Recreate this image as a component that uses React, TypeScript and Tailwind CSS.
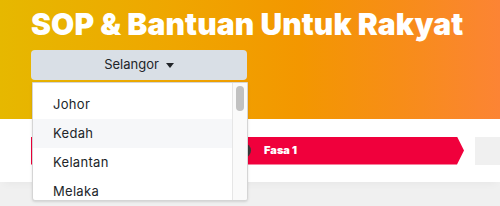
const states = ['Johor', 'Kedah', 'Kelantan', 'Melaka']

const StateDropdown = () => {
  return (
    <div className="relative w-[217px]">
      <button className="flex h-[30px] w-[216px] items-center justify-center gap-[7px] rounded-[4px] bg-[#d9dfe6] text-[13px] text-[#212529]">
        Selangor
        <span className="mt-[1px] h-0 w-0 border-x-[4.5px] border-t-[5px] border-x-transparent border-t-[#212529]" />
      </button>
      <div className="absolute left-[1px] top-[32px] z-10 flex h-[119px] w-[216px] overflow-hidden rounded-b-[3px] border border-[#d5d5d5] bg-white shadow-sm">
        <ul className="flex-1 pt-[7px]">
          {states.map((s) => (
            <li
              key={s}
              className={
                'flex h-[29px] items-center pl-[20px] text-[13px] tracking-[0.3px] text-[#212529] ' +
                (s === 'Kedah' ? 'bg-[#f6f7f9]' : '')
              }
            >
              {s}
            </li>
          ))}
        </ul>
        <div className="w-[15px] border-l border-[#e6e6e6] bg-[#fafafa] pt-[3px]">
          <div className="mx-auto h-[25px] w-[8px] rounded-full bg-[#c1c1c1]" />
        </div>
      </div>
    </div>
  )
}

export default function App() {
  return (
    <div className="h-[206px] w-[500px] overflow-hidden bg-[#f0f0f0] font-['Inter','Liberation_Sans',sans-serif]">
      <div className="h-[119px] bg-[linear-gradient(90deg,#e6b800_0%,#efa600_35%,#f39700_60%,#f78d18_80%,#fc8434_100%)] pl-[31px] pt-[4px]">
        <h1 className="whitespace-nowrap text-[30px] font-black leading-[40px] tracking-[0.1px] text-white">
          SOP &amp; Bantuan Untuk Rakyat
        </h1>
        <div className="mt-[6px]">
          <StateDropdown />
        </div>
      </div>
      <div className="flex h-[63px] items-center gap-[11px] bg-white pl-[31px] shadow-[0_6px_8px_-4px_rgba(0,0,0,0.04)]">
        <div className="flex h-[28px] w-[433px] items-center bg-[#f0003c] pl-[205px] [clip-path:polygon(0_0,calc(100%-7px)_0,100%_50%,calc(100%-7px)_100%,0_100%)]">
          <span className="h-[15px] w-[15px] rounded-full bg-[#3a3a3a]" />
          <span className="ml-[13px] text-[11px] font-black text-white">Fasa 1</span>
        </div>
        <div className="h-[28px] flex-1 bg-[#f0f0f0]" />
      </div>
    </div>
  )
}
